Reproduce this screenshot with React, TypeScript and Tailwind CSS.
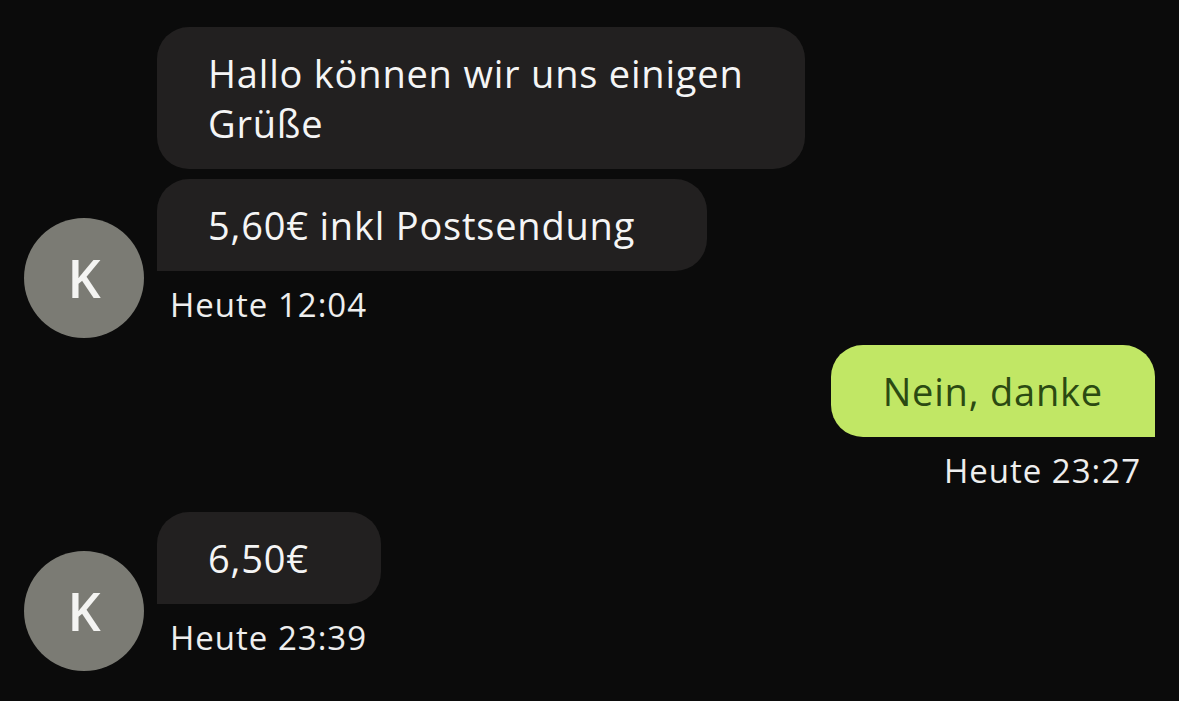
const font = { fontFamily: '"Open Sans", "Noto Sans", sans-serif' };

function Avatar() {
  return (
    <div className="w-[120px] h-[120px] shrink-0 rounded-full bg-[#7b7b74] flex items-center justify-center text-[52px] font-semibold text-[#f4f4f2]">
      K
    </div>
  );
}

function Stamp({ text, right }: { text: string; right?: boolean }) {
  return (
    <div className={`h-[67px] flex items-center text-[33px] tracking-[1px] font-medium text-[#eeeeee] ${right ? 'justify-end pr-[14px]' : 'pl-[13px]'}`}>
      {text}
    </div>
  );
}

function Incoming({ messages, time }: { messages: string[]; time: string }) {
  return (
    <div className="flex items-end gap-[13px]">
      <Avatar />
      <div className="flex flex-col items-start">
        <div className="flex flex-col gap-[10px] items-start">
          {messages.map((m, i) => {
            const last = i === messages.length - 1;
            return (
              <div
                key={i}
                className={`bg-[#222020] text-[#f5f5f5] text-[38px] tracking-[0.8px] leading-[50px] pl-[51px] py-[21px] max-w-[648px] rounded-[32px] ${last ? 'rounded-bl-none pr-[72px]' : 'pr-[60px]'}`}
              >
                {m}
              </div>
            );
          })}
        </div>
        <Stamp text={time} />
      </div>
    </div>
  );
}

export default function App() {
  return (
    <div className="w-[1179px] h-[701px] bg-[#0b0b0b] overflow-hidden" style={font}>
      <div className="flex flex-col gap-[7px] pt-[27px] pl-[24px] pr-[24px]">
        <Incoming messages={['Hallo können wir uns einigen Grüße', '5,60€ inkl Postsendung']} time="Heute 12:04" />

        <div className="flex flex-col items-end">
          <div className="bg-[#c1e765] text-[#2b4a12] text-[38px] tracking-[0.8px] leading-[50px] px-[52px] py-[21px] rounded-[32px] rounded-br-none">
            Nein, danke
          </div>
          <Stamp text="Heute 23:27" right />
        </div>

        <div className="pt-[1px]">
          <Incoming messages={['6,50€']} time="Heute 23:39" />
        </div>
      </div>
    </div>
  );
}
